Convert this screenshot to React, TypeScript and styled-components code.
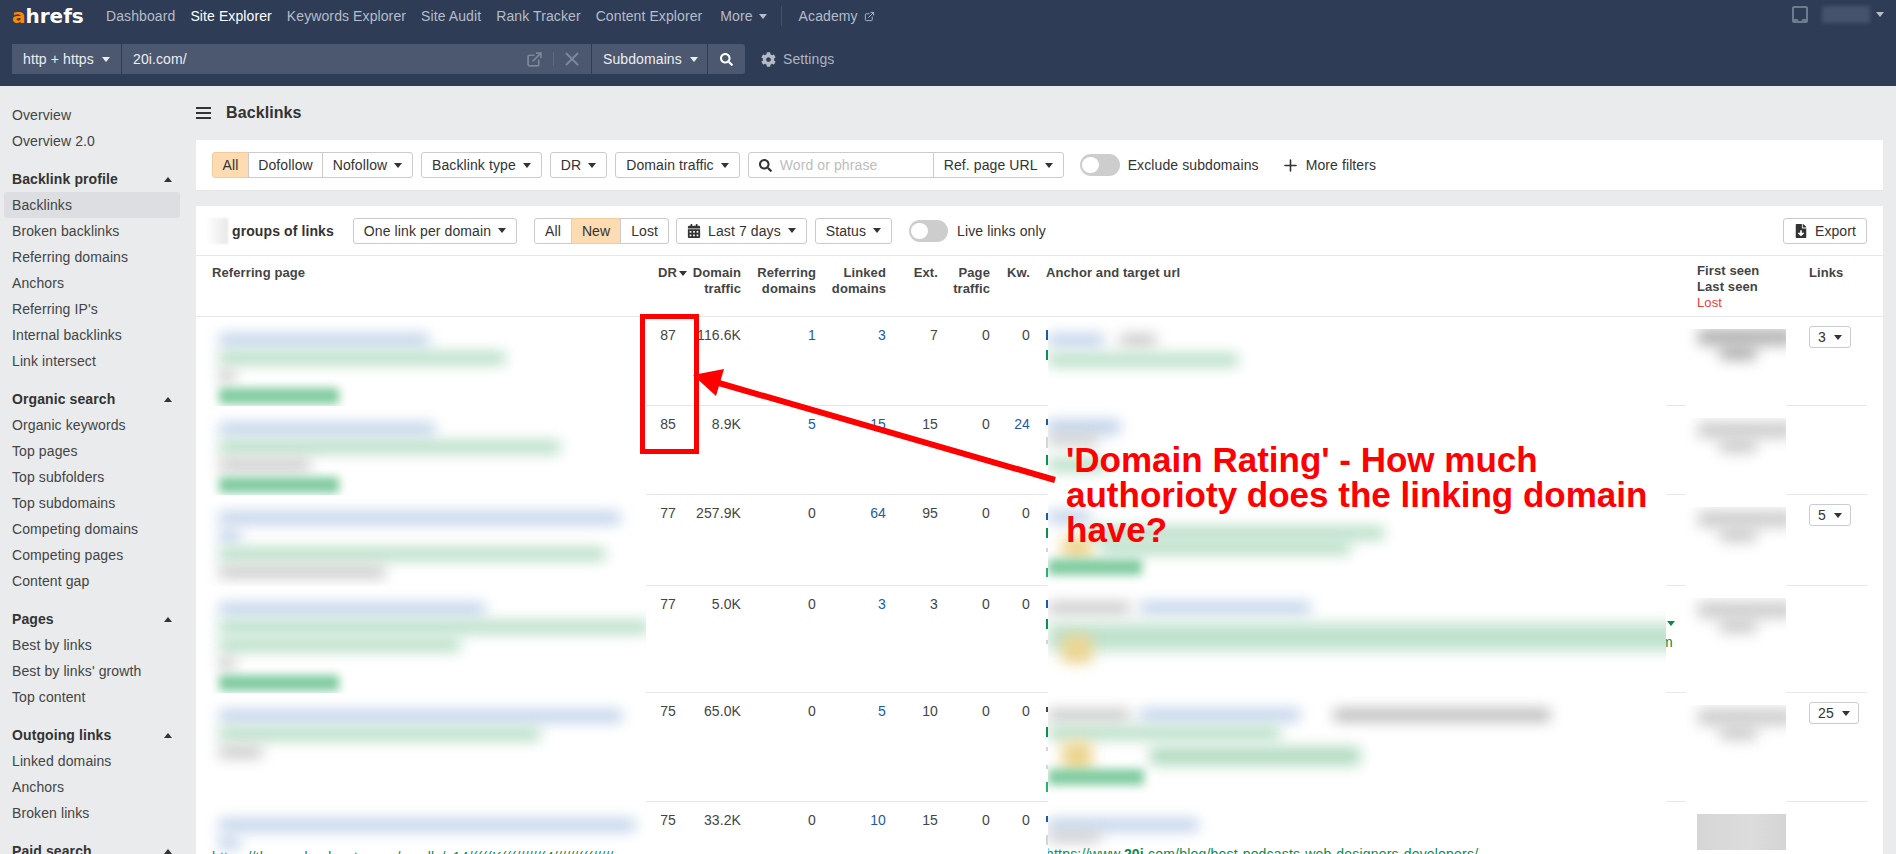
import React from 'react';
import styled, { createGlobalStyle } from 'styled-components';
import { FaCog, FaSearch, FaCalendarAlt, FaFileDownload } from 'react-icons/fa';
import { ExternalLink, X, Plus } from 'lucide-react';

const Global = createGlobalStyle`
  html, body { margin: 0; padding: 0; background: #e9ebed; }
  * { box-sizing: border-box; }
  body { font-family: "Liberation Sans", Arial, sans-serif; font-size: 14px; letter-spacing: 0.1px; color: #333; }
`;

const Page = styled.div`
  position: relative;
  width: 1896px;
  height: 854px;
  overflow: hidden;
  display: flex;
  flex-direction: column;
`;

/* ---------- header ---------- */
const Header = styled.header`
  height: 86px;
  flex: none;
  background: #2e3c56;
  display: flex;
  flex-direction: column;
`;
const TopRow = styled.div`
  height: 44px;
  padding: 0 12px 12px;
  display: flex;
  align-items: center;
  gap: 15px;
`;
const Logo = styled.div`
  font-family: "DejaVu Sans", sans-serif;
  font-weight: 700;
  font-size: 20px;
  line-height: 20px;
  color: #fff;
  width: 79px;
  letter-spacing: 0;
  span { color: #ff8800; }
`;
const NavItem = styled.span<{ $active?: boolean; $ml?: number }>`
  color: ${p => (p.$active ? '#fff' : '#b6bcc8')};
  margin-left: ${p => p.$ml ?? 0}px;
  display: inline-flex;
  align-items: center;
  gap: 6px;
  white-space: nowrap;
`;
const NavDivider = styled.div`
  width: 1px;
  height: 20px;
  background: #45516a;
  margin: 0 2px 0 -1px;
`;
const TopRight = styled.div`
  margin-left: auto;
  display: flex;
  align-items: center;
  gap: 14px;
  transform: translateY(-2px);
`;
const UserBlur = styled.div`
  width: 48px;
  height: 17px;
  margin-right: -8px;
  background: #47536b;
  filter: blur(2px);
`;
const Caret = styled.i<{ $color?: string; $up?: boolean; $size?: number }>`
  display: inline-block;
  flex: none;
  width: 0;
  height: 0;
  border-left: ${p => p.$size ?? 4}px solid transparent;
  border-right: ${p => p.$size ?? 4}px solid transparent;
  ${p => (p.$up ? 'border-bottom' : 'border-top')}: ${p => (p.$size ?? 4) + 1}px solid ${p => p.$color ?? '#333'};
`;
const SearchRow = styled.div`
  height: 30px;
  padding-left: 12px;
  display: flex;
  align-items: stretch;
`;
const SearchSeg = styled.div<{ $w: number; $end?: boolean }>`
  width: ${p => p.$w}px;
  background: #4c586f;
  color: #eceef2;
  display: flex;
  align-items: center;
  justify-content: ${p => (p.$end ? 'center' : 'flex-start')};
  padding: ${p => (p.$end ? '0' : '0 11px')};
  gap: 8px;
  margin-right: 1px;
  border-radius: ${p => (p.$end ? '0 3px 3px 0' : '0')};
  white-space: nowrap;
`;
const InputIcons = styled.div`
  margin-left: auto;
  margin-right: -3px;
  display: flex;
  align-items: center;
  color: #7c879b;
`;
const InputSep = styled.i`
  display: block;
  width: 1px;
  height: 14px;
  margin: 0 7px 0 10px;
  background: #5f6b82;
`;
const SettingsLink = styled.div`
  margin-left: 15px;
  display: flex;
  align-items: center;
  gap: 7px;
  color: #aeb5c2;
  svg { color: #b3b9c5; }
`;

/* ---------- body ---------- */
const Body = styled.div`
  flex: 1;
  min-height: 0;
  display: flex;
`;
const Sidebar = styled.nav`
  width: 196px;
  flex: none;
  padding-top: 16px;
  display: flex;
  flex-direction: column;
  gap: 12px;
`;
const SideGroup = styled.div`
  display: flex;
  flex-direction: column;
`;
const SideHead = styled.div`
  height: 26px;
  padding: 0 24px 0 12px;
  display: flex;
  align-items: center;
  justify-content: space-between;
  font-weight: 700;
  color: #333;
`;
const SideItem = styled.div<{ $active?: boolean }>`
  height: 26px;
  width: 176px;
  margin-left: 4px;
  padding-left: 8px;
  display: flex;
  align-items: center;
  border-radius: 3px;
  color: #444;
  background: ${p => (p.$active ? '#dcdee2' : 'transparent')};
`;
const Main = styled.main`
  flex: 1;
  min-width: 0;
  padding-right: 13px;
  display: flex;
  flex-direction: column;
  gap: 16px;
`;
const TitleRow = styled.div`
  height: 38px;
  margin-top: 8px;
  margin-bottom: -8px;
  display: flex;
  align-items: center;
  gap: 15px;
`;
const Burger = styled.div`
  width: 15px;
  height: 12px;
  border-top: 2px solid #333;
  border-bottom: 2px solid #333;
  position: relative;
  &::after {
    content: '';
    position: absolute;
    left: 0;
    right: 0;
    top: 3px;
    height: 2px;
    background: #333;
  }
`;
const Title = styled.h1`
  margin: 0;
  font-size: 16px;
  font-weight: 700;
  color: #333;
`;
const FilterCard = styled.section`
  height: 50px;
  flex: none;
  background: #fff;
  padding: 0 16px;
  display: flex;
  align-items: center;
  gap: 8px;
  box-shadow: 0 1px 0 #e2e4e6;
`;
const Group = styled.div<{ $ml?: number }>`
  display: flex;
  margin-left: ${p => p.$ml ?? 0}px;
`;
const Btn = styled.div<{ $active?: boolean; $ml?: string; $w?: number }>`
  height: 26px;
  ${p => (p.$w ? `width: ${p.$w}px;` : 'padding: 0 10px;')}
  ${p => (p.$ml ? `margin-left: ${p.$ml};` : '')}
  display: flex;
  align-items: center;
  justify-content: center;
  gap: 7px;
  background: ${p => (p.$active ? '#fedbb1' : '#fff')};
  border: 1px solid ${p => (p.$active ? '#f2cc9f' : '#c9cbce')};
  border-radius: 3px;
  color: #333;
  white-space: nowrap;
  ${Group} > & { border-radius: 0; margin-left: -1px; }
  ${Group} > &:first-child { border-radius: 3px 0 0 3px; margin-left: 0; }
  ${Group} > &:last-child { border-radius: 0 3px 3px 0; }
`;
const SearchBox = styled.div`
  width: 186px;
  height: 26px;
  padding-left: 10px;
  display: flex;
  align-items: center;
  gap: 8px;
  border: 1px solid #c9cbce;
  border-radius: 3px 0 0 3px;
  color: #bdbdbd;
`;
const Toggle = styled.div<{ $w: number; $ml: number }>`
  width: ${p => p.$w}px;
  margin-left: ${p => p.$ml}px;
  height: 22px;
  border-radius: 11px;
  background: #cdcdcd;
  padding: 3px 2px;
  flex: none;
  &::before {
    content: '';
    display: block;
    width: 17px;
    height: 16px;
    border-radius: 50%;
    background: #fff;
  }
`;
const PlainLabel = styled.span<{ $ml?: number }>`
  margin-left: ${p => p.$ml ?? 0}px;
  display: inline-flex;
  align-items: center;
  gap: 6px;
  white-space: nowrap;
  color: #333;
`;
const ResultCard = styled.section`
  flex: 1;
  min-height: 0;
  background: #fff;
  display: flex;
  flex-direction: column;
`;
const Toolbar = styled.div`
  height: 50px;
  flex: none;
  padding: 0 16px 0 10px;
  display: flex;
  align-items: center;
  border-bottom: 1px solid #e6e7e9;
`;
const CountBlur = styled.div`
  width: 22px;
  height: 26px;
  background: linear-gradient(90deg, #fff, #e8e8e8);
  filter: blur(1px);
  margin-right: 4px;
`;
const CountLabel = styled.strong`
  color: #333;
  font-weight: 700;
  margin-right: 19px;
  white-space: nowrap;
`;
const Grid = `
  display: grid;
  grid-template-columns: 450px 38px 65px 75px 70px 52px 52px 40px 10px 618px 20px 100px 81px;
`;
const HeadRow = styled.div`
  ${Grid}
  height: 61px;
  flex: none;
  border-bottom: 1px solid #e6e7e9;
`;
const HeadCell = styled.div<{ $right?: boolean; $pl?: number; $pr?: number; $pt?: number; $ml?: number }>`
  padding: ${p => p.$pt ?? 9}px ${p => p.$pr ?? 8}px 0 ${p => p.$pl ?? 0}px;
  margin-left: ${p => p.$ml ?? 0}px;
  font-weight: 700;
  font-size: 13px;
  line-height: 16px;
  color: #444;
  text-align: ${p => (p.$right ? 'right' : 'left')};
`;
const SortLabel = styled.span`
  display: inline-flex;
  align-items: center;
  gap: 2px;
  margin-right: -3px;
`;
const LostLabel = styled.div`
  color: #f03b3b;
  font-weight: 400;
`;
const Row = styled.div<{ $h: number }>`
  ${Grid}
  height: ${p => p.$h}px;
  flex: none;
`;
const RefCell = styled.div`
  overflow: hidden;
  padding: 17px 0 0 23px;
  display: flex;
  flex-direction: column;
  align-items: flex-start;
  gap: 6px;
`;
const Smudge = styled.div<{ $c: string; $w: number; $h?: number; $ml?: number; $mt?: number }>`
  flex: none;
  width: ${p => p.$w}px;
  height: ${p => p.$h ?? 12}px;
  margin-left: ${p => p.$ml ?? 0}px;
  margin-top: ${p => p.$mt ?? 0}px;
  background: ${p => p.$c};
  filter: blur(${p => (p.$c === CHIP ? 5 : 7)}px);
`;
const NumCell = styled.div<{ $link?: boolean }>`
  padding: 10px 8px 0 0;
  line-height: 16px;
  text-align: right;
  color: ${p => (p.$link ? '#1b5aa8' : '#444')};
  border-bottom: 1px solid #e6e7e9;
`;
const PeekCell = styled.div`
  display: flex;
  flex-direction: column;
  align-items: flex-end;
  border-bottom: 1px solid #e6e7e9;
  overflow: hidden;
`;
const PeekMark = styled.i<{ $t: number; $h: number; $c: string }>`
  display: block;
  flex: none;
  width: 2px;
  margin-top: ${p => p.$t}px;
  height: ${p => p.$h}px;
  background: ${p => p.$c};
`;
const AnchorCell = styled.div`
  overflow: hidden;
  display: flex;
  flex-direction: column;
  align-items: flex-start;
`;
const AnchorLine = styled.div<{ $mt: number }>`
  flex: none;
  display: flex;
  align-items: center;
  margin-top: ${p => p.$mt}px;
`;
const GapCell = styled.div`
  overflow: hidden;
  border-bottom: 1px solid #e6e7e9;
  display: flex;
  flex-direction: column;
  align-items: flex-start;
`;
const GapBits = styled.div`
  margin-top: 35px;
  display: flex;
  flex-direction: column;
  gap: 8px;
  color: #0a8a4a;
  line-height: 16px;
  i { margin-left: 1px; }
  span { margin-left: -5px; }
`;
const DateCell = styled.div`
  padding-top: 12px;
  height: 100%;
  overflow: hidden;
`;
const DateClip = styled.div<{ $solid?: boolean }>`
  height: ${p => (p.$solid ? '36px' : '70px')};
  margin-left: ${p => (p.$solid ? '11px' : '0')};
  overflow: hidden;
  background: ${p => (p.$solid ? 'linear-gradient(90deg,#d6d6d6,#dcdcdc 60%,#d4d4d4)' : 'transparent')};
`;
const LinksCell = styled.div`
  padding: 9px 0 0 23px;
  border-bottom: 1px solid #e6e7e9;
`;
const LinkSelect = styled.div`
  display: inline-flex;
  height: 22px;
  padding: 0 8px;
  gap: 8px;
  align-items: center;
  border: 1px solid #c9cbce;
  border-radius: 3px;
  color: #333;
`;
const UrlLine = styled.div<{ $ml: number; $mt: number }>`
  flex: none;
  margin: ${p => p.$mt}px 0 0 ${p => p.$ml}px;
  color: #0a8a4a;
  line-height: 16px;
  letter-spacing: 0.2px;
  white-space: nowrap;
  b { font-weight: 700; }
`;

/* ---------- annotation overlay ---------- */
const RedBox = styled.div`
  position: absolute;
  left: 640px;
  top: 314px;
  width: 59px;
  height: 140px;
  border: 5px solid #ff0000;
`;
const ArrowSvg = styled.svg`
  position: absolute;
  left: 680px;
  top: 360px;
`;
const Note = styled.div`
  position: absolute;
  left: 1066px;
  top: 442px;
  width: 620px;
  font-size: 35px;
  line-height: 35px;
  letter-spacing: 0;
  font-weight: 700;
  color: #ff0000;
`;

const BLUE = '#bccfe8';
const GREEN = '#aedabf';
const CHIP = '#7fcb9f';
const GRAY = '#c8c8c8';
const YELLOW = '#ecd590';
const DATE1 = '#b0b0b0';
const DATE2 = '#cccccc';

type S = { c: string; w: number; h?: number; ml?: number };

const side: { head?: string; items: string[]; active?: string }[] = [
  { items: ['Overview', 'Overview 2.0'] },
  { head: 'Backlink profile', active: 'Backlinks', items: ['Backlinks', 'Broken backlinks', 'Referring domains', 'Anchors', "Referring IP's", 'Internal backlinks', 'Link intersect'] },
  { head: 'Organic search', items: ['Organic keywords', 'Top pages', 'Top subfolders', 'Top subdomains', 'Competing domains', 'Competing pages', 'Content gap'] },
  { head: 'Pages', items: ['Best by links', "Best by links' growth", 'Top content'] },
  { head: 'Outgoing links', items: ['Linked domains', 'Anchors', 'Broken links'] },
  { head: 'Paid search', items: [] },
];

const nav = ['Dashboard', 'Site Explorer', 'Keywords Explorer', 'Site Audit', 'Rank Tracker', 'Content Explorer'];

type RowData = {
  h: number;
  ref: S[];
  nums: [string, string, string, string, string, string, string];
  links: number[];
  peek: [number, number, string][];
  anchor: { mt: number; parts: S[] }[];
  dateTop: number;
  dateColor: string;
  select?: string;
};

const DK = '#1b5aa8';
const PG = '#0a9150';
const LG = '#d5d5d5';

const rows: RowData[] = [
  {
    h: 89,
    ref: [{ c: BLUE, w: 210 }, { c: GREEN, w: 286 }, { c: GRAY, w: 16 }, { c: CHIP, w: 120, h: 16 }],
    nums: ['87', '116.6K', '1', '3', '7', '0', '0'],
    links: [2, 3],
    peek: [[13, 10, DK], [10, 10, PG]],
    anchor: [
      { mt: 17, parts: [{ c: BLUE, w: 56 }, { c: GRAY, w: 36, ml: 16 }] },
      { mt: 8, parts: [{ c: GREEN, w: 190 }] },
    ],
    dateTop: 0,
    dateColor: DATE1,
    select: '3',
  },
  {
    h: 89,
    ref: [{ c: BLUE, w: 216 }, { c: GREEN, w: 341 }, { c: GRAY, w: 91 }, { c: CHIP, w: 120, h: 16 }],
    nums: ['85', '8.9K', '5', '15', '15', '0', '24'],
    links: [2, 3, 6],
    peek: [[13, 6, DK], [12, 11, LG], [7, 10, PG]],
    anchor: [
      { mt: 14, parts: [{ c: BLUE, w: 72, h: 14 }] },
      { mt: 1, parts: [{ c: GRAY, w: 50, h: 10 }] },
      { mt: 14, parts: [{ c: GREEN, w: 60 }] },
    ],
    dateTop: 4,
    dateColor: DATE2,
  },
  {
    h: 91,
    ref: [{ c: BLUE, w: 401 }, { c: BLUE, w: 21 }, { c: GREEN, w: 386 }, { c: GRAY, w: 166 }],
    nums: ['77', '257.9K', '0', '64', '95', '0', '0'],
    links: [3],
    peek: [[18, 7, DK], [8, 10, PG], [10, 4, LG], [16, 9, '#2db070']],
    anchor: [
      { mt: 16, parts: [{ c: BLUE, w: 42 }] },
      { mt: 4, parts: [{ c: GREEN, w: 296, ml: 40 }] },
      { mt: -2, parts: [{ c: YELLOW, w: 30, h: 22, ml: 14 }, { c: GREEN, w: 250, ml: 8 }] },
      { mt: 0, parts: [{ c: CHIP, w: 94, h: 16 }] },
    ],
    dateTop: 4,
    dateColor: DATE2,
    select: '5',
  },
  {
    h: 107,
    ref: [{ c: BLUE, w: 266 }, { c: GREEN, w: 430 }, { c: GREEN, w: 241 }, { c: GRAY, w: 16 }, { c: CHIP, w: 120, h: 16 }],
    nums: ['77', '5.0K', '0', '3', '3', '0', '0'],
    links: [3],
    peek: [[14, 8, DK], [11, 10, PG], [11, 4, LG]],
    anchor: [
      { mt: 16, parts: [{ c: GRAY, w: 82 }, { c: BLUE, w: 170, ml: 10 }] },
      { mt: 9, parts: [{ c: '#c0e2ce', w: 640, h: 28 }] },
      { mt: -16, parts: [{ c: YELLOW, w: 30, h: 28, ml: 14 }] },
    ],
    dateTop: 4,
    dateColor: DATE2,
  },
  {
    h: 109,
    ref: [{ c: BLUE, w: 403 }, { c: GREEN, w: 321 }, { c: GRAY, w: 43 }],
    nums: ['75', '65.0K', '0', '5', '10', '0', '0'],
    links: [3],
    peek: [[14, 5, '#444'], [15, 10, PG], [10, 4, LG], [14, 4, LG], [13, 10, '#2db070']],
    anchor: [
      { mt: 16, parts: [{ c: GRAY, w: 82 }, { c: BLUE, w: 160, ml: 10 }, { c: '#b5b5b5', w: 216, ml: 34 }] },
      { mt: 6, parts: [{ c: GREEN, w: 232 }] },
      { mt: 2, parts: [{ c: YELLOW, w: 30, h: 30, ml: 14 }, { c: GREEN, w: 210, ml: 58, h: 18 }] },
      { mt: -2, parts: [{ c: CHIP, w: 96, h: 16 }] },
    ],
    dateTop: 4,
    dateColor: DATE2,
    select: '25',
  },
  {
    h: 60,
    ref: [{ c: BLUE, w: 416 }, { c: BLUE, w: 21 }],
    nums: ['75', '33.2K', '0', '10', '15', '0', '0'],
    links: [3],
    peek: [[14, 6, DK], [13, 10, LG]],
    anchor: [
      { mt: 17, parts: [{ c: BLUE, w: 150 }] },
      { mt: 1, parts: [{ c: GRAY, w: 52, h: 10 }] },
    ],
    dateTop: 0,
    dateColor: DATE2,
  },
];

function InboxIcon() {
  return (
    <svg width="16" height="17" viewBox="0 0 16 17">
      <path d="M2 0h12a2 2 0 0 1 2 2v13a2 2 0 0 1-2 2H2a2 2 0 0 1-2-2V2a2 2 0 0 1 2-2zm0 2v11h3.5l1 2h3l1-2H14V2H2z" fill="#6f7a8d" fillRule="evenodd" />
    </svg>
  );
}

export default function App() {
  return (
    <Page>
      <Global />
      <Header>
        <TopRow>
          <Logo><span>a</span>hrefs</Logo>
          {nav.map(n => (
            <NavItem key={n} $active={n === 'Site Explorer'}>{n}</NavItem>
          ))}
          <NavItem $ml={3}>More <Caret $color="#b6bcc8" /></NavItem>
          <NavDivider />
          <NavItem>Academy <ExternalLink size={11} /></NavItem>
          <TopRight>
            <InboxIcon />
            <UserBlur />
            <Caret $color="#b6bcc8" />
          </TopRight>
        </TopRow>
        <SearchRow>
          <SearchSeg $w={109}>http + https <Caret $color="#eceef2" /></SearchSeg>
          <SearchSeg $w={469}>
            20i.com/
            <InputIcons>
              <ExternalLink size={17} strokeWidth={2.4} />
              <InputSep />
              <X size={22} strokeWidth={2.2} />
            </InputIcons>
          </SearchSeg>
          <SearchSeg $w={115}>Subdomains <Caret $color="#eceef2" /></SearchSeg>
          <SearchSeg $w={37} $end><FaSearch size={13} color="#fff" /></SearchSeg>
          <SettingsLink><FaCog size={15} /> Settings</SettingsLink>
        </SearchRow>
      </Header>
      <Body>
        <Sidebar>
          {side.map((g, i) => (
            <SideGroup key={i}>
              {g.head && (
                <SideHead>{g.head}<Caret $up $color="#333" /></SideHead>
              )}
              {g.items.map(it => (
                <SideItem key={it} $active={it === g.active}>{it}</SideItem>
              ))}
            </SideGroup>
          ))}
        </Sidebar>
        <Main>
          <TitleRow>
            <Burger />
            <Title>Backlinks</Title>
          </TitleRow>
          <FilterCard>
            <Group>
              <Btn $active $w={37}>All</Btn>
              <Btn $w={75}>Dofollow</Btn>
              <Btn $w={91}>Nofollow <Caret /></Btn>
            </Group>
            <Btn>Backlink type <Caret /></Btn>
            <Btn>DR <Caret /></Btn>
            <Btn>Domain traffic <Caret /></Btn>
            <Group>
              <SearchBox><FaSearch size={13} color="#333" /> Word or phrase</SearchBox>
              <Btn>Ref. page URL <Caret /></Btn>
            </Group>
            <Toggle $w={40} $ml={8} />
            <PlainLabel>Exclude subdomains</PlainLabel>
            <PlainLabel $ml={14}><Plus size={19} color="#333" /> More filters</PlainLabel>
          </FilterCard>
          <ResultCard>
            <Toolbar>
              <CountBlur />
              <CountLabel>groups of links</CountLabel>
              <Btn>One link per domain <Caret /></Btn>
              <Group $ml={17}>
                <Btn>All</Btn>
                <Btn $active>New</Btn>
                <Btn>Lost</Btn>
              </Group>
              <Btn $ml="7px"><FaCalendarAlt size={14} /> Last 7 days <Caret /></Btn>
              <Btn $ml="8px">Status <Caret /></Btn>
              <Toggle $w={39} $ml={17} />
              <PlainLabel $ml={9}>Live links only</PlainLabel>
              <Btn $ml="auto"><FaFileDownload size={14} /> Export</Btn>
            </Toolbar>
            <HeadRow>
              <HeadCell $pl={16}>Referring page</HeadCell>
              <HeadCell $right $pr={0}><SortLabel>DR <Caret $size={4} /></SortLabel></HeadCell>
              <HeadCell $right>Domain traffic</HeadCell>
              <HeadCell $right>Referring domains</HeadCell>
              <HeadCell $right>Linked domains</HeadCell>
              <HeadCell $right>Ext.</HeadCell>
              <HeadCell $right>Page traffic</HeadCell>
              <HeadCell $right>Kw.</HeadCell>
              <HeadCell />
              <HeadCell $ml={-2}>Anchor and target url</HeadCell>
              <HeadCell />
              <HeadCell $pl={11} $pt={7}>First seen<br />Last seen<LostLabel>Lost</LostLabel></HeadCell>
              <HeadCell $pl={23}>Links</HeadCell>
            </HeadRow>
            {rows.map((r, i) => (
              <Row key={i} $h={r.h}>
                <RefCell>
                  {r.ref.map((s, j) => (
                    <Smudge key={j} $c={s.c} $w={s.w} $h={s.h} $ml={s.ml} />
                  ))}
                  {i === 5 && (
                    <UrlLine $ml={-7} $mt={-6}>https://thegoodpodcasts.com/scrolls/v14/((((K(((//////(4//////(((/////</UrlLine>
                  )}
                </RefCell>
                {r.nums.map((n, j) => (
                  <NumCell key={j} $link={r.links.includes(j)}>{n}</NumCell>
                ))}
                <PeekCell>
                  {r.peek.map(([t, h, c], j) => (
                    <PeekMark key={j} $t={t} $h={h} $c={c} />
                  ))}
                </PeekCell>
                <AnchorCell>
                  {r.anchor.map((l, j) => (
                    <AnchorLine key={j} $mt={l.mt}>
                      {l.parts.map((s, k) => (
                        <Smudge key={k} $c={s.c} $w={s.w} $h={s.h} $ml={s.ml} />
                      ))}
                    </AnchorLine>
                  ))}
                  {i === 5 && (
                    <UrlLine $ml={-2} $mt={4}>https://www.<b>20i</b>.com/blog/best-podcasts-web-designers-developers/</UrlLine>
                  )}
                </AnchorCell>
                <GapCell>
                  {i === 3 && (
                    <GapBits>
                      <Caret $color="#0a8a4a" />
                      <span>m</span>
                    </GapBits>
                  )}
                </GapCell>
                <DateCell>
                  <DateClip $solid={i === 5}>
                    {i !== 5 && (
                      <>
                        <Smudge $c={r.dateColor} $w={96} $h={16} $ml={12} $mt={r.dateTop} />
                        <Smudge $c={r.dateColor} $w={36} $h={15} $ml={34} />
                      </>
                    )}
                  </DateClip>
                </DateCell>
                <LinksCell>
                  {r.select && <LinkSelect>{r.select} <Caret /></LinkSelect>}
                </LinksCell>
              </Row>
            ))}
          </ResultCard>
        </Main>
      </Body>
      <RedBox />
      <ArrowSvg width="380" height="125" viewBox="680 360 380 125">
        <line x1="712" y1="381" x2="1055" y2="480" stroke="#ff0000" strokeWidth="6" />
        <polygon points="693,375 724,369 716,396" fill="#ff0000" />
      </ArrowSvg>
      <Note>
        'Domain Rating' - How much<br />
        authorioty does the linking domain<br />
        have?
      </Note>
    </Page>
  );
}
